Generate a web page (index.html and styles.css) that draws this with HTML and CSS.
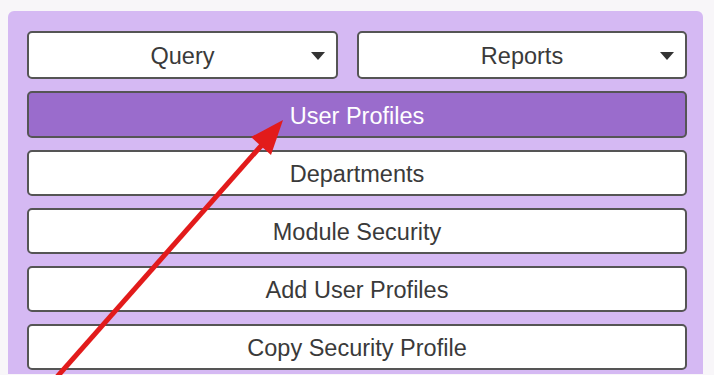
FILE: index.html
```html
<!DOCTYPE html>
<html>
<head>
<meta charset="utf-8">
<link rel="stylesheet" href="styles.css">
</head>
<body>
<div class="panel">
  <div class="top-row">
    <button class="btn dropdown query">Query<span class="caret"></span></button>
    <button class="btn dropdown reports">Reports<span class="caret"></span></button>
  </div>
  <button class="btn active">User Profiles</button>
  <button class="btn">Departments</button>
  <button class="btn">Module Security</button>
  <button class="btn">Add User Profiles</button>
  <button class="btn last">Copy Security Profile</button>
</div>
<svg class="arrow" width="714" height="375" viewBox="0 0 714 375">
  <line x1="56" y1="378" x2="268" y2="138" stroke="#e21b1b" stroke-width="5" stroke-linecap="butt"/>
  <polygon points="283,120 251,137 271,155" fill="#e21b1b"/>
</svg>
</body>
</html>
```
FILE: styles.css
```css
html, body {
  margin: 0;
  padding: 0;
  overflow: hidden;
}
body {
  background: #f8f6f9;
  padding: 11px 11px 0 8px;
  height: 375px;
  box-sizing: border-box;
  font-family: "Liberation Sans", Arial, sans-serif;
}
.panel {
  background: #d5b9f3;
  border-radius: 6px 6px 0 0;
  padding: 20px 16px 4px 19px;
  display: flex;
  flex-direction: column;
}
.top-row {
  display: flex;
  gap: 19px;
  margin-bottom: 12px;
}
.btn {
  box-sizing: border-box;
  height: 46px;
  border: 2px solid #555;
  border-radius: 5px;
  background: #fff;
  color: #3a3a3a;
  font-family: "Liberation Sans", Arial, sans-serif;
  font-size: 23.5px;
  padding: 3px 0 0 0;
  margin: 0 0 12px 0;
  text-align: center;
  position: relative;
  width: 100%;
}
.btn.last {
  margin-bottom: 0;
}
.top-row .btn {
  height: 48px;
  margin: 0;
}
.query { flex: 0 0 311px; width: 311px; }
.reports { flex: 0 0 330px; width: 330px; }
.caret {
  position: absolute;
  right: 11px;
  top: 19px;
  width: 0;
  height: 0;
  border-left: 7px solid transparent;
  border-right: 7px solid transparent;
  border-top: 8px solid #333;
}
.btn.active {
  background: #9a6ccc;
  color: #fff;
  height: 47px;
}
.arrow {
  position: absolute;
  left: 0;
  top: 0;
  pointer-events: none;
}
```
